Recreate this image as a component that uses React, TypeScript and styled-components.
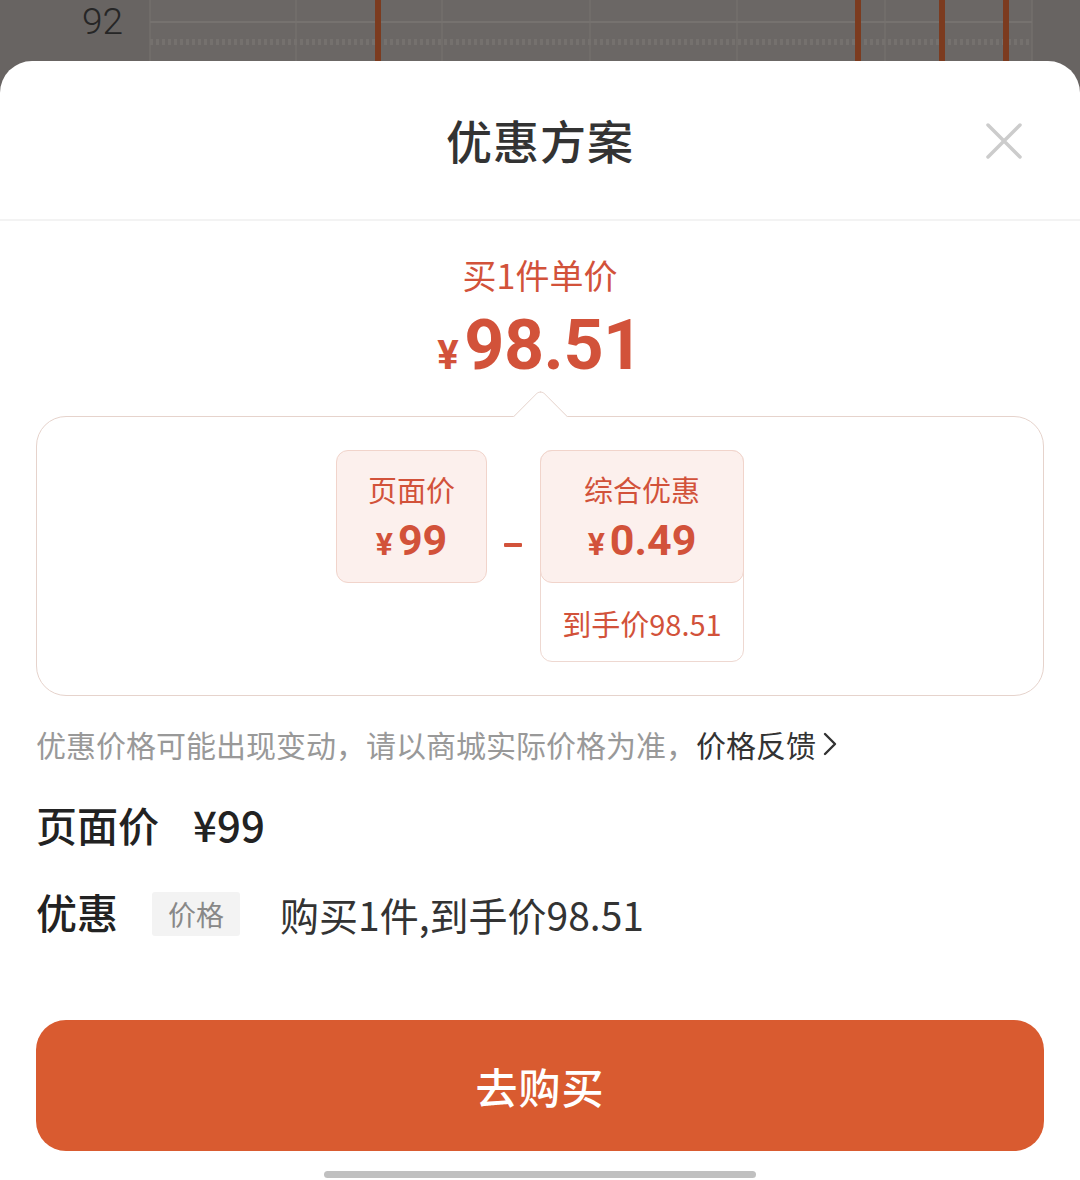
import styled, { createGlobalStyle } from 'styled-components';

const CJK = `"Noto Sans CJK SC", "Noto Sans", sans-serif`;
const NUM = `Roboto, "Noto Sans CJK SC", sans-serif`;
const RED = '#d2523a';

const GlobalStyle = createGlobalStyle`
  html, body {
    margin: 0;
    padding: 0;
    background: #686462;
    font-family: ${CJK};
  }
  * { box-sizing: border-box; }
`;

const chartBars = [378, 858, 942, 1006];
const gridLines = [150, 296, 442, 590, 737, 885, 1032];

const Backdrop = () => (
  <StyledBackdrop>
    <StyledAxisLabel>92</StyledAxisLabel>
    <StyledChart width="1080" height="92" viewBox="0 0 1080 92">
      <rect x="150" y="0" width="882" height="92" fill="#6b6765" />
      {gridLines.map((x) => (
        <line key={x} x1={x} y1="0" x2={x} y2="92" stroke="#736f6d" strokeWidth="1.5" />
      ))}
      <line x1="150" y1="22" x2="1032" y2="22" stroke="#76726f" strokeWidth="2" />
      <line x1="150" y1="42" x2="1032" y2="42" stroke="#75716e" strokeWidth="6" strokeDasharray="3 3" />
      {chartBars.map((x) => (
        <rect key={x} x={x - 3} y="0" width="6" height="92" fill="#7c3b1f" />
      ))}
    </StyledChart>
  </StyledBackdrop>
);

const CloseIcon = () => (
  <svg width="38" height="38" viewBox="0 0 38 38">
    <path d="M3 3 L35 35 M35 3 L3 35" stroke="#cccccc" strokeWidth="3.5" strokeLinecap="round" />
  </svg>
);

const Chevron = () => (
  <svg width="16" height="28" viewBox="0 0 16 28">
    <path d="M3 4 L13 14 L3 24" stroke="#333" strokeWidth="2.4" fill="none" strokeLinecap="round" strokeLinejoin="round" />
  </svg>
);

export default function App() {
  return (
    <>
      <GlobalStyle />
      <StyledPage>
        <Backdrop />
        <StyledSheet>
          <StyledHeader>
            <StyledTitle>优惠方案</StyledTitle>
            <StyledClose>
              <CloseIcon />
            </StyledClose>
          </StyledHeader>

          <StyledBody>
            <StyledSummary>
              <StyledSummaryLabel>买1件单价</StyledSummaryLabel>
              <StyledBigPrice>
                <StyledBigYen>¥</StyledBigYen>98.51
              </StyledBigPrice>
            </StyledSummary>

            <StyledCard>
              <StyledFormula>
                <StyledPriceBox>
                  <StyledBoxLabel>页面价</StyledBoxLabel>
                  <StyledBoxPrice>
                    <StyledBoxYen>¥</StyledBoxYen>99
                  </StyledBoxPrice>
                </StyledPriceBox>
                <StyledMinus />
                <StyledDiscountGroup>
                  <StyledPriceBox $wide>
                    <StyledBoxLabel>综合优惠</StyledBoxLabel>
                    <StyledBoxPrice>
                      <StyledBoxYen>¥</StyledBoxYen>0.49
                    </StyledBoxPrice>
                  </StyledPriceBox>
                  <StyledFinalNote>到手价98.51</StyledFinalNote>
                </StyledDiscountGroup>
              </StyledFormula>
            </StyledCard>

            <StyledDisclaimer>
              优惠价格可能出现变动，请以商城实际价格为准，
              <StyledFeedback>
                价格反馈
                <Chevron />
              </StyledFeedback>
            </StyledDisclaimer>

            <StyledInfoRow $top={34}>
              <StyledInfoLabel>页面价</StyledInfoLabel>
              <StyledInfoPrice>¥99</StyledInfoPrice>
            </StyledInfoRow>

            <StyledInfoRow $top={37}>
              <StyledInfoLabel>优惠</StyledInfoLabel>
              <StyledTag>价格</StyledTag>
              <StyledInfoText>购买1件,到手价98.51</StyledInfoText>
            </StyledInfoRow>

            <StyledBuyButton>去购买</StyledBuyButton>
          </StyledBody>

          <StyledHomeBar />
        </StyledSheet>
      </StyledPage>
    </>
  );
}

const StyledPage = styled.div`
  width: 1080px;
  height: 1180px;
  overflow: hidden;
  display: flex;
  flex-direction: column;
  background: #686462;
`;

const StyledBackdrop = styled.div`
  position: relative;
  height: 61px;
  flex-shrink: 0;
`;

const StyledAxisLabel = styled.div`
  position: absolute;
  left: 82px;
  top: -1px;
  font-family: ${NUM};
  font-weight: 300;
  font-size: 37px;
  line-height: 46px;
  color: #262626;
  z-index: 1;
`;

const StyledChart = styled.svg`
  display: block;
`;

const StyledSheet = styled.div`
  position: relative;
  flex: 1;
  background: #ffffff;
  border-radius: 32px 32px 0 0;
  display: flex;
  flex-direction: column;
`;

const StyledHeader = styled.div`
  position: relative;
  height: 160px;
  display: flex;
  align-items: center;
  justify-content: center;
  padding-bottom: 2px;
  border-bottom: 2px solid #f3f3f3;
`;

const StyledTitle = styled.h1`
  margin: 0;
  font-size: 46px;
  font-weight: 500;
  color: #333333;
  letter-spacing: 1px;
`;

const StyledClose = styled.div`
  position: absolute;
  right: 57px;
  top: 61px;
  display: flex;
`;

const StyledBody = styled.div`
  display: flex;
  flex-direction: column;
  padding: 0 36px;
`;

const StyledSummary = styled.div`
  display: flex;
  flex-direction: column;
  align-items: center;
  padding-top: 31px;
`;

const StyledSummaryLabel = styled.div`
  font-size: 34px;
  line-height: 46px;
  color: ${RED};
`;

const StyledBigPrice = styled.div`
  font-family: ${NUM};
  font-weight: 700;
  font-size: 70px;
  line-height: 90px;
  color: ${RED};
  letter-spacing: -0.5px;
  margin-top: 2px;
`;

const StyledBigYen = styled.span`
  font-size: 40px;
  margin-right: 6px;
`;

const StyledCard = styled.div`
  position: relative;
  margin-top: 15px;
  height: 280px;
  border: 1.5px solid #e6d3cc;
  border-radius: 30px;
  display: flex;
  justify-content: center;
  padding-top: 33px;

  &::before {
    content: '';
    position: absolute;
    left: 50%;
    top: -20px;
    width: 38px;
    height: 38px;
    margin-left: -19px;
    background: #ffffff;
    border-top: 1.5px solid #e6d3cc;
    border-left: 1.5px solid #e6d3cc;
    border-top-left-radius: 6px;
    transform: rotate(45deg);
  }
`;

const StyledFormula = styled.div`
  display: flex;
  align-items: flex-start;
`;

const StyledPriceBox = styled.div<{ $wide?: boolean }>`
  width: ${(p) => (p.$wide ? '204px' : '151px')};
  height: 133px;
  background: #fcf0ed;
  border: 1.5px solid #f1d4cb;
  border-radius: 12px;
  display: flex;
  flex-direction: column;
  align-items: center;
  padding-top: 17px;
  margin: ${(p) => (p.$wide ? '-1.5px -1.5px 0' : '0')};
`;

const StyledBoxLabel = styled.div`
  font-size: 29px;
  line-height: 42px;
  color: ${RED};
`;

const StyledBoxPrice = styled.div`
  font-family: ${NUM};
  font-weight: 700;
  font-size: 43px;
  line-height: 52px;
  color: ${RED};
  margin-top: 4px;
`;

const StyledBoxYen = styled.span`
  font-size: 32px;
  margin-right: 5px;
`;

const StyledMinus = styled.div`
  width: 18px;
  height: 4px;
  background: ${RED};
  margin: 93px 18px 0 17px;
  border-radius: 1px;
`;

const StyledDiscountGroup = styled.div`
  width: 204px;
  height: 212px;
  border: 1.5px solid #eed8d1;
  border-radius: 12px;
  display: flex;
  flex-direction: column;
  align-items: center;
`;

const StyledFinalNote = styled.div`
  margin-top: 19px;
  font-size: 29px;
  line-height: 42px;
  color: ${RED};
`;

const StyledDisclaimer = styled.div`
  margin-top: 27px;
  display: flex;
  align-items: center;
  font-size: 30px;
  line-height: 42px;
  color: #999999;
  white-space: nowrap;
`;

const StyledFeedback = styled.span`
  display: inline-flex;
  align-items: center;
  gap: 6px;
  color: #333333;
`;

const StyledInfoRow = styled.div<{ $top: number }>`
  margin-top: ${(p) => p.$top}px;
  display: flex;
  align-items: center;
  height: 50px;
`;

const StyledInfoLabel = styled.div`
  font-size: 41px;
  font-weight: 500;
  color: #222222;
  margin-right: 34px;
  line-height: 50px;
`;

const StyledInfoPrice = styled.div`
  font-size: 42px;
  font-weight: 500;
  color: #222222;
  line-height: 50px;
`;

const StyledTag = styled.div`
  height: 44px;
  padding: 0 16px;
  background: #f3f3f3;
  border-radius: 3px;
  font-size: 28px;
  line-height: 44px;
  color: #888888;
  margin-right: 40px;
  margin-top: 6px;
`;

const StyledInfoText = styled.div`
  font-size: 39px;
  color: #333333;
  line-height: 50px;
  margin-top: 6px;
`;

const StyledBuyButton = styled.button`
  margin-top: 84px;
  height: 131px;
  width: 100%;
  border: none;
  border-radius: 30px;
  background: #d95b30;
  color: #ffffff;
  font-family: ${CJK};
  font-size: 42px;
  font-weight: 500;
  letter-spacing: 1px;
`;

const StyledHomeBar = styled.div`
  align-self: center;
  width: 432px;
  height: 7px;
  border-radius: 4px;
  background: #c0c0c0;
  margin-top: 20px;
`;
